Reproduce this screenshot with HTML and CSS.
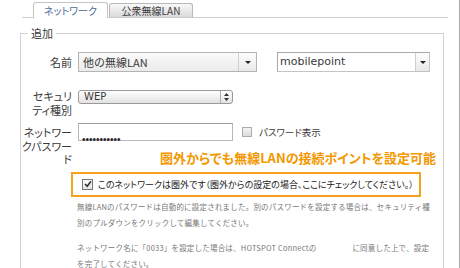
FILE: index.html
```html
<!DOCTYPE html>
<html lang="ja">
<head>
    <meta charset="UTF-8">
    <title>ネットワーク設定</title>
    <link rel="stylesheet" href="styles.css">
</head>
<body>
    <div class="page">
        <div class="tabs">
            <div class="tab active">ネットワーク</div>
            <div class="tab">公衆無線LAN</div>
        </div>

        <fieldset class="group">
            <legend>追加</legend>

            <div class="row row-name">
                <label class="label">名前</label>
                <div class="select select-gray">
                    <span class="value">他の無線LAN</span>
                    <span class="arrow"><i class="tri"></i></span>
                </div>
                <div class="select select-white">
                    <span class="value latin">mobilepoint</span>
                    <span class="arrow"><i class="tri"></i></span>
                </div>
            </div>

            <div class="row row-security">
                <label class="label">セキュリ<br>ティ種別</label>
                <div class="select select-round">
                    <span class="value latin">WEP</span>
                    <span class="arrow">
                        <svg width="5" height="8" viewBox="0 0 5 8"><path d="M2.5 0 L5 3 L0 3 Z M0 5 L5 5 L2.5 8 Z" fill="#333"/></svg>
                    </span>
                </div>
            </div>

            <div class="row row-password">
                <label class="label">ネットワー<br>クパスワー<br>ド</label>
                <div class="control">
                    <div class="pw-line">
                        <div class="input"><span class="dots">•••••••••••</span></div>
                        <span class="checkbox"></span>
                        <span class="check-text">パスワード表示</span>
                    </div>
                    <div class="callout">圏外からでも無線LANの接続ポイントを設定可能</div>
                </div>
            </div>

            <div class="outside-box">
                <span class="checkbox checked">
                    <svg width="8" height="8" viewBox="0 0 8 8"><path d="M1 4 L3.2 6.3 L7 1.3" fill="none" stroke="#333" stroke-width="1.6"/></svg>
                </span>
                <span class="outside-text">このネットワークは圏外です（圏外からの設定の場合、ここにチェックしてください。）</span>
            </div>

            <div class="notes">
                <p>無線LANのパスワードは自動的に設定されました。別のパスワードを設定する場合は、セキュリティ種<br>別のプルダウンをクリックして編集してください。</p>
                <p>ネットワーク名に「0033」を設定した場合は、HOTSPOT Connectの<span class="gap"></span>に同意した上で、設定<br>を完了してください。</p>
            </div>
        </fieldset>
    </div>
</body>
</html>
```

FILE: styles.css
```css
/* Network settings panel */
body {
    margin: 0;
    background-color: #fff;
    font-family: "Noto Sans CJK JP", "DejaVu Sans", sans-serif;
    color: #3a3a3a;
    height: 268px;
    overflow: hidden;
}

.page {
    width: 460px;
    height: 268px;
    box-sizing: border-box;
    border-right: 1px solid #a8a8a8;
    overflow: hidden;
}

/* tabs */
.tabs {
    display: flex;
    align-items: flex-end;
    height: 17px;
    margin: 0 11px 0 22px;
    padding-left: 11px;
    border-bottom: 1px solid #cdcdcd;
}

.tab {
    box-sizing: border-box;
    height: 14px;
    width: 84px;
    margin-left: 1px;
    border: 1px solid #b9b9b9;
    border-bottom: none;
    border-radius: 3px 3px 0 0;
    background: linear-gradient(#f8f8f8, #dadada);
    font-size: 10px;
    line-height: 13px;
    text-align: center;
    font-feature-settings: "palt";
}

.tab.active {
    height: 16px;
    width: 75px;
    margin-left: 0;
    margin-bottom: -1px;
    background: #fff;
    border-color: #c4c4c4;
    color: #4b6d9b;
    line-height: 15px;
}

/* group box */
.group {
    margin: 8px 0 0 20px;
    padding: 12px 0 0 0;
    width: 424px;
    min-height: 300px;
    box-sizing: border-box;
    border: 1px solid #d2d2d2;
    border-bottom: none;
}

legend {
    margin-left: 7px;
    padding: 0 3px;
    font-size: 11px;
    line-height: 14px;
}

.row {
    display: flex;
    align-items: flex-start;
    gap: 6px;
}

.row-name {
    align-items: center;
}

.row-security {
    margin-top: 17px;
}

.row-password {
    margin-top: 6px;
}

.label {
    flex: none;
    width: 51px;
    text-align: right;
    font-size: 11px;
    line-height: 14px;
    font-feature-settings: "palt";
}

.row-password .label {
    padding-top: 3px;
    line-height: 13.5px;
}

/* select boxes */
.select {
    display: flex;
    box-sizing: border-box;
    height: 20px;
    border: 1px solid #b4b4b4;
    font-size: 11px;
}

.select .value {
    flex: 1;
    padding-left: 4px;
    line-height: 18px;
    white-space: nowrap;
}

.select .arrow {
    display: flex;
    align-items: center;
    justify-content: center;
    border-left: 1px solid #cfcfcf;
    background: linear-gradient(#fdfdfd, #e9e9e9);
}

.tri {
    width: 0;
    height: 0;
    border-left: 3px solid transparent;
    border-right: 3px solid transparent;
    border-top: 3px solid #222;
}

.latin {
    font-family: "DejaVu Sans", sans-serif;
}

.select-gray {
    width: 179px;
    background: linear-gradient(#fafafa, #ebebeb);
}

.select-gray .arrow {
    width: 17px;
}

.select-white {
    width: 153px;
    margin-left: 14px;
    background: #fff;
    border-color: #a9a9a9 #c4c4c4 #c4c4c4 #a9a9a9;
}

.select-white .value {
    padding-left: 2px;
}

.select-white .arrow {
    width: 13px;
}

.select-round {
    width: 155px;
    height: 14px;
    margin-top: 1px;
    border-color: #9a9a9a;
    border-radius: 3px;
    background: linear-gradient(#ffffff, #e2e2e2);
    font-size: 10px;
}

.select-round .value {
    padding-left: 5px;
    line-height: 12px;
}

.select-round .arrow {
    width: 11px;
    background: none;
    border-left-color: #b0b0b0;
}

/* password */
.pw-line {
    display: flex;
    align-items: center;
}

.input {
    box-sizing: border-box;
    width: 155px;
    height: 18px;
    border: 1px solid #b8b8b8;
    border-top-color: #9c9c9c;
    padding-left: 3px;
}

.dots {
    font-family: "Liberation Sans", sans-serif;
    font-size: 10px;
    line-height: 16px;
    color: #222;
}

.checkbox {
    box-sizing: border-box;
    display: inline-flex;
    align-items: center;
    justify-content: center;
    width: 10px;
    height: 10px;
    border: 1px solid #ababab;
    background: linear-gradient(#f4f4f4, #dcdcdc);
}

.pw-line .checkbox {
    margin-left: 9px;
}

.check-text {
    margin-left: 7px;
    font-size: 9.5px;
    font-feature-settings: "palt";
}

.callout {
    margin: 9px 0 0 82px;
    color: #f39800;
    font-size: 13px;
    font-weight: bold;
    line-height: 16px;
    white-space: nowrap;
    font-feature-settings: "palt";
}

/* outside checkbox */
.outside-box {
    display: flex;
    align-items: center;
    box-sizing: border-box;
    width: 350px;
    height: 25px;
    margin: 5px 0 0 50px;
    padding-left: 9px;
    border: 2px solid #f6a21e;
}

.checkbox.checked {
    width: 11px;
    height: 11px;
    border-color: #777;
    background: linear-gradient(#fdfdfd, #e4e4e4);
}

.outside-text {
    margin-left: 5px;
    font-size: 9px;
    color: #222;
    white-space: nowrap;
    font-feature-settings: "palt";
}

/* notes */
.notes {
    margin: 2px 0 0 56px;
    font-size: 7.5px;
    line-height: 16px;
    letter-spacing: 0.2px;
    color: #777;
    white-space: nowrap;
}

.notes p {
    margin: 0 0 9px 0;
}

.gap {
    display: inline-block;
    width: 36px;
}
```
